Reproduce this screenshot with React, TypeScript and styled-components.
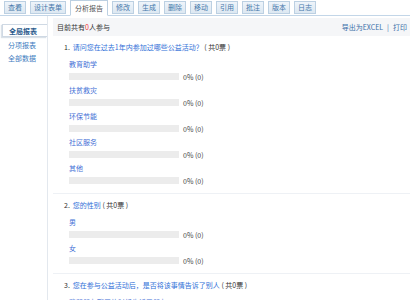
import React from "react";
import styled, { createGlobalStyle } from "styled-components";

const Global = createGlobalStyle`
  html, body { margin: 0; padding: 0; background: #fff; }
  body { font-family: "Noto Sans CJK SC", "Liberation Sans", sans-serif; font-size: 7px; color: #333; }
  * { box-sizing: border-box; }
`;

const Page = styled.div`
  width: 410px;
  height: 300px;
  overflow: hidden;
  display: flex;
  flex-direction: column;
`;

const TabBar = styled.div`
  display: flex;
  align-items: flex-end;
  gap: 4px;
  height: 17px;
  padding-left: 4px;
  border-bottom: 1px solid #c3d6e8;
`;

const Tab = styled.div<{ $active?: boolean }>`
  height: ${(p) => (p.$active ? "16px" : "13px")};
  margin-bottom: ${(p) => (p.$active ? "-1px" : "1px")};
  padding: 0 ${(p) => (p.$active ? "4px" : "3px")};
  display: flex;
  align-items: center;
  justify-content: center;
  border: 1px solid #bcd0e2;
  border-bottom: ${(p) => (p.$active ? "1px solid #fff" : "1px solid #bcd0e2")};
  background: ${(p) => (p.$active ? "#fff" : "linear-gradient(#eef4fa, #dde8f2)")};
  color: ${(p) => (p.$active ? "#555" : "#4477aa")};
  line-height: 1;
  white-space: nowrap;
`;

const Body = styled.div`
  flex: 1;
  display: flex;
`;

const Sidebar = styled.div`
  width: 48px;
  border-right: 1px solid #e3e8ee;
  padding-top: 8px;
  display: flex;
  flex-direction: column;
  gap: 1px;
`;

const SideItem = styled.div<{ $active?: boolean }>`
  height: ${(p) => (p.$active ? "13px" : "12px")};
  margin: ${(p) => (p.$active ? "0 0 1px 2px" : "0")};
  padding-left: ${(p) => (p.$active ? "6px" : "8px")};
  display: flex;
  align-items: center;
  background: #fff;
  border: ${(p) => (p.$active ? "1px solid #cfd9e4" : "none")};
  border-right: none;
  box-shadow: ${(p) => (p.$active ? "-1px 1px 1px rgba(150,170,190,0.35)" : "none")};
  color: ${(p) => (p.$active ? "#2a5a8c" : "#3e7cc0")};
  font-weight: ${(p) => (p.$active ? 700 : 400)};
  white-space: nowrap;
`;

const Main = styled.div`
  flex: 1;
  padding: 2px 0 0 5px;
  display: flex;
  flex-direction: column;
`;

const Header = styled.div`
  height: 18px;
  background: #f5f6f8;
  display: flex;
  align-items: center;
  justify-content: space-between;
  padding: 0 3px 0 4px;
  color: #333;
`;

const Red = styled.span`
  color: #e33;
`;

const Links = styled.div`
  color: #3b6fa8;
  display: flex;
  gap: 4px;
`;

const Question = styled.div<{ $last?: boolean }>`
  padding: 5px 0 5px 11px;
  border-bottom: ${(p) => (p.$last ? "none" : "1px solid #eef1f5")};
`;

const QTitle = styled.div`
  height: 12px;
  line-height: 12px;
  display: flex;
  gap: 3px;
  color: #333;
  white-space: nowrap;
  margin-bottom: 5px;
`;

const QText = styled.span`
  color: #2f6fd8;
`;

const Option = styled.div`
  padding-left: 5px;
  margin-bottom: 3px;
`;

const OptLabel = styled.div`
  height: 12px;
  line-height: 12px;
  color: #3f6fd6;
`;

const BarRow = styled.div`
  display: flex;
  align-items: center;
  height: 9px;
  margin-top: 2px;
  gap: 4px;
  color: #444;
`;

const Bar = styled.div`
  width: 110px;
  height: 7px;
  background: #ececec;
`;

const Fill = styled.div`
  height: 100%;
  background: #5b9bd5;
`;

const tabs = ["查看", "设计表单", "分析报告", "修改", "生成", "删除", "移动", "引用", "批注", "版本", "日志"];

const questions = [
  {
    n: "1.",
    t: "请问您在过去1年内参加过哪些公益活动？",
    opts: ["教育助学", "扶贫救灾", "环保节能", "社区服务", "其他"],
  },
  { n: "2.", t: "您的性别", opts: ["男", "女"] },
  { n: "3.", t: "您在参与公益活动后，是否将该事情告诉了别人", opts: ["我和朋友聊天的时候告诉了朋友"] },
];

export default function App() {
  return (
    <Page>
      <Global />
      <TabBar>
        {tabs.map((t) => (
          <Tab key={t} $active={t === "分析报告"}>
            {t}
          </Tab>
        ))}
      </TabBar>
      <Body>
        <Sidebar>
          <SideItem $active>全局报表</SideItem>
          <SideItem>分项报表</SideItem>
          <SideItem>全部数据</SideItem>
        </Sidebar>
        <Main>
          <Header>
            <span>
              目前共有<Red>0</Red>人参与
            </span>
            <Links>
              <span>导出为EXCEL</span>
              <span>|</span>
              <span>打印</span>
            </Links>
          </Header>
          {questions.map((q, i) => (
            <Question key={q.n} $last={i === questions.length - 1}>
              <QTitle>
                <span>{q.n}</span>
                <span>
                  <QText>{q.t}</QText> ( 共0票 )
                </span>
              </QTitle>
              {q.opts.map((o) => (
                <Option key={o}>
                  <OptLabel>{o}</OptLabel>
                  <BarRow>
                    <Bar>
                      <Fill style={{ width: "0%" }} />
                    </Bar>
                    <span>0% (0)</span>
                  </BarRow>
                </Option>
              ))}
            </Question>
          ))}
        </Main>
      </Body>
    </Page>
  );
}
